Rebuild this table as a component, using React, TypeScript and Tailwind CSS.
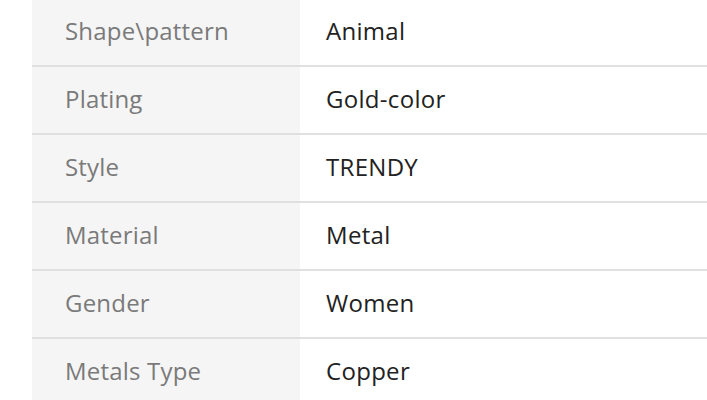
const ROWS = [
  { label: "Shape\\pattern", value: "Animal" },
  { label: "Plating", value: "Gold-color" },
  { label: "Style", value: "TRENDY" },
  { label: "Material", value: "Metal" },
  { label: "Gender", value: "Women" },
  { label: "Metals Type", value: "Copper" },
];

export default function App() {
  return (
    <div className="h-[400px] w-[707px] overflow-hidden bg-white pl-[32px] font-['Open_Sans',sans-serif]">
      <div className="-mt-px">
        {ROWS.map((row, i) => (
          <div key={i} className="flex h-[68px] border-b-2 border-[#e0e0e0]">
            <div className="flex w-[268px] items-center bg-[#f5f5f5] pb-[2px] pl-[33px] text-[24px] tracking-[0.2px] text-[#7a7a7a]">
              {row.label}
            </div>
            <div className="flex flex-1 items-center pb-[2px] pl-[26px] text-[24px] tracking-[0.3px] text-[#222]">
              {row.value}
            </div>
          </div>
        ))}
      </div>
    </div>
  );
}
